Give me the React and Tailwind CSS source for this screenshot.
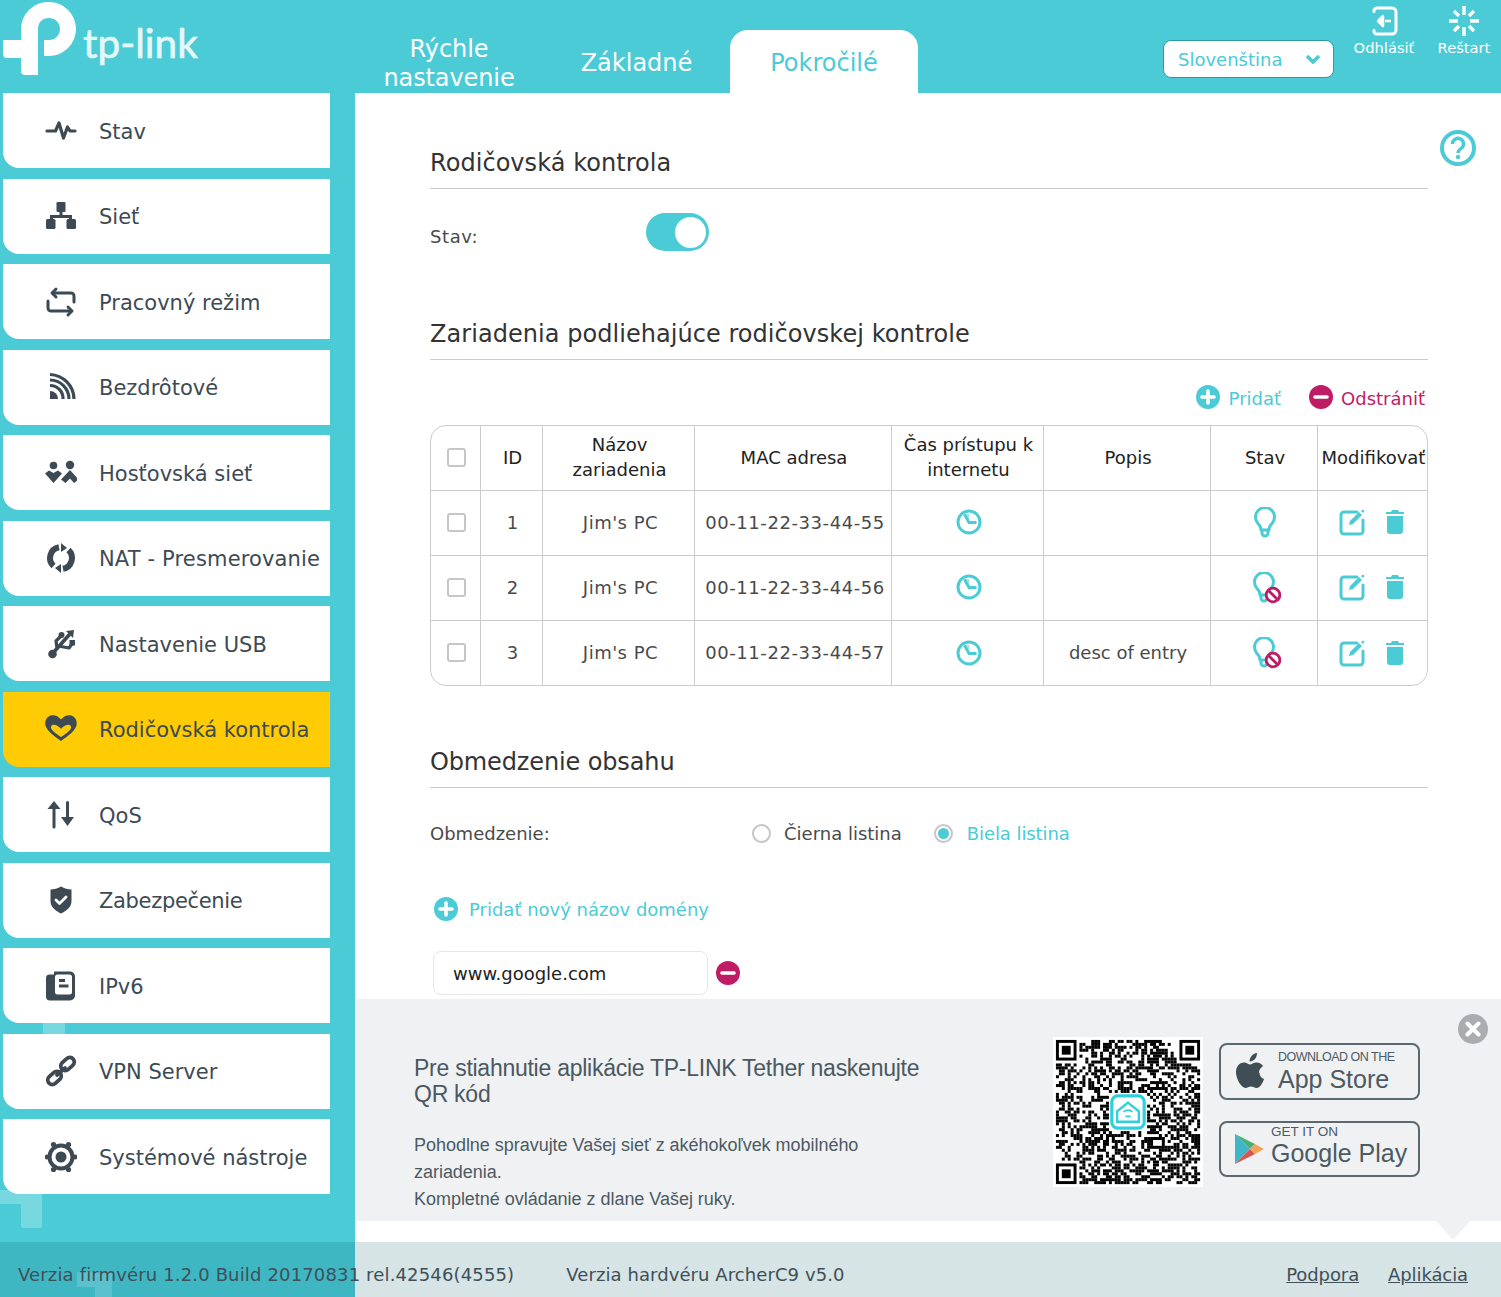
import React from "react";

const TEAL = "#4acbd6";
const DARK = "#3d4a54";
const RED = "#c01c66";

function Svg({ size = 32, w, h, children, className = "" }) {
  return (
    <svg width={w || size} height={h || size} viewBox={`0 0 ${w || size} ${h || size}`} className={`shrink-0 ${className}`}>
      {children}
    </svg>
  );
}

const stroke = { fill: "none", stroke: DARK, strokeLinecap: "round", strokeLinejoin: "round" };

const icons = {
  stav: (
    <path d="M2 16h8.500l3.500-8 4.500 15 4-11 2.500 4H30" {...stroke} strokeWidth="3.200" />
  ),
  siet: (
    <g fill={DARK}>
      <rect x="11.500" y="2" width="9" height="10" rx="1" />
      <path d="M14.500 11h3v4H27v5h-3v-2H8v2H5v-5h9.500z" />
      <rect x="1" y="19" width="9.500" height="10" rx="1.500" />
      <rect x="21.500" y="19" width="9.500" height="10" rx="1.500" />
    </g>
  ),
  rezim: (
    <g {...stroke} strokeWidth="3">
      <path d="M8 7h18a3 3 0 0 1 3 3v6" />
      <path d="M11 3 7 7l4 4" />
      <path d="M3 15v7a3 3 0 0 0 3 3h19" />
      <path d="M23 21l4 4-4 4" />
    </g>
  ),
  wifi: (
    <g {...stroke} strokeWidth="3.200" strokeLinecap="butt">
      <path d="M5 14.500a13 13 0 0 1 13 13.500" />
      <path d="M5 9a19 19 0 0 1 19 19" />
      <path d="M5 3.500a25 25 0 0 1 24 24.500" />
      <path d="M5 20a8 8 0 0 1 8 8H5z" fill={DARK} stroke="none" />
    </g>
  ),
  guest: (
    <g fill={DARK}>
      <circle cx="8.500" cy="8.500" r="3.800" />
      <circle cx="25" cy="8" r="4.200" />
      <path d="M0 16.500l4-3 4.500 2.500 4.500-2.500 4 3L8.500 26z" />
      <path d="M25 13l8.500 9.500-4.500 3.500-4-4.500-4.500 4.500-4.500-3.500z" />
    </g>
  ),
  nat: (
    <g>
      <path d="M14 5.200A11 11 0 0 0 8.500 24" {...stroke} strokeWidth="6" strokeLinecap="butt" />
      <path d="M18 26.800A11 11 0 0 0 23.500 8" {...stroke} strokeWidth="6" strokeLinecap="butt" />
      <path d="M16 1l6 5-6 4z" fill={DARK} />
      <path d="M16 31l-6-5 6-4z" fill={DARK} />
    </g>
  ),
  usb: (
    <g>
      <circle cx="7.500" cy="26" r="4.300" fill={DARK} />
      <path d="M8 25 24 7" {...stroke} strokeWidth="3.600" />
      <path d="M12 20 11 13l5-5" {...stroke} strokeWidth="3.200" />
      <path d="M16 18.500l8 1.500 3-4" {...stroke} strokeWidth="3.200" />
      <path d="M21 3l8-1-1 8z" fill={DARK} />
      <circle cx="16.500" cy="7" r="3" fill={DARK} />
      <rect x="24.500" y="12" width="5.500" height="5.500" fill={DARK} />
    </g>
  ),
  heart: (
    <g>
      <path d="M16 6.500C13 2.500 9 1.500 5.500 2.500 1.500 4 -.5 8 .5 12.500 2 18 9 23 16 28c7-5 14-10 15.500-15.500 1-4.500-1-8.500-5-10-3.500-1-7.500 0-10.500 4z" fill={DARK} />
      <path d="M16 24c-3-2-9-6-10-9-.5-2.500 1.500-4 4-3 2.500.5 4.500 2 6 4 1.500-2 3.500-3.500 6-4 2.500-1 4.500.5 4 3-1 3-7 7-10 9z" fill="#ffcb05" />
    </g>
  ),
  qos: (
    <g fill={DARK}>
      <path d="M9 2l6.500 8h-5V28a1.500 1.500 0 0 1-3 0V10h-5z" />
      <path d="M21 3.500a1.500 1.500 0 0 1 3 0V18h5l-6.500 9L16 18h5z" />
    </g>
  ),
  shield: (
    <g>
      <path d="M16 2.500c3 2 7 3 10.500 3v11.500c0 6-5 10-10.500 12.500C10.500 27 5.500 23 5.500 17V5.500c3.500 0 7.500-1 10.500-3z" fill={DARK} />
      <path d="M11 16l3.500 3.500L21 13" {...stroke} stroke="#fff" strokeWidth="2.800" />
    </g>
  ),
  doc: (
    <g>
      <path d="M9 1.500h16a5 5 0 0 1 5 5v19a5 5 0 0 1-5 5H5a4 4 0 0 1-4-4V8a3.500 3.500 0 0 1 3.500-3.500H9z" fill={DARK} />
      <rect x="10" y="4.500" width="17" height="20" rx="2.500" fill="#fff" />
      <path d="M14 10.500h6M14 16h9.500" {...stroke} strokeWidth="2.800" strokeLinecap="butt" />
    </g>
  ),
  link: (
    <g {...stroke} strokeWidth="3.800">
      <rect x="2" y="18.500" width="15" height="9" rx="4.500" transform="rotate(-42 9.500 23)" />
      <rect x="15" y="4.500" width="15" height="9" rx="4.500" transform="rotate(-42 22.500 9)" />
      <path d="M12 20l8-7" />
    </g>
  ),
  gear: (
    <g>
      <circle cx="16" cy="16" r="11.500" fill="#fff" stroke={DARK} strokeWidth="4" />
      <circle cx="16" cy="16" r="5.500" fill={DARK} />
      <g fill={DARK}>
        <circle cx="8.500" cy="3.500" r="2.600" />
        <circle cx="23.500" cy="3.500" r="2.600" />
        <circle cx="8.500" cy="28.500" r="2.600" />
        <circle cx="23.500" cy="28.500" r="2.600" />
        <circle cx="2" cy="16" r="2.400" />
        <circle cx="30" cy="16" r="2.400" />
      </g>
    </g>
  ),
};

function SideItem({ icon, label, active, track = "" }) {
  return (
    <div className={`relative flex items-center w-[327px] h-[75px] rounded-bl-[16px] ${active ? "bg-[#ffcb05]" : "bg-white"}`}>
      <div className="w-[96px] flex justify-center pl-[20px] pr-0">
        <Svg>{icons[icon]}</Svg>
      </div>
      <span className={`mt-[4px] text-[21px] text-[#3d4a54] whitespace-nowrap ${track}`}>{label}</span>
    </div>
  );
}

function Plus() {
  return (
    <Svg size={24}>
      <circle cx="12" cy="12" r="12" fill={TEAL} />
      <path d="M12 6v12M6 12h12" stroke="#fff" strokeWidth="3.600" strokeLinecap="round" />
    </Svg>
  );
}

function Minus() {
  return (
    <Svg size={24}>
      <circle cx="12" cy="12" r="12" fill={RED} />
      <path d="M6 12h12" stroke="#fff" strokeWidth="3.600" strokeLinecap="round" />
    </Svg>
  );
}

function Clock() {
  return (
    <Svg size={26}>
      <circle cx="13" cy="13" r="11" fill="#fff" stroke={TEAL} strokeWidth="3" />
      <path d="M7.500 5 13 13.500 13.500 5z" fill={TEAL} opacity="0.5" />
      <path d="M8.500 5.500l4.500 8h7.500" fill="none" stroke={TEAL} strokeWidth="2.800" />
    </Svg>
  );
}

function Bulb({ off }) {
  return (
    <Svg w={32} h={34} className="mt-[3px]">
      <g fill="none" stroke={TEAL} strokeWidth="3" strokeLinecap="round" strokeLinejoin="round" transform={off ? "translate(-1 0)" : "translate(0 0)"}>
        <path d="M12 23c0-3-1-4.500-3-6.500a9.500 9.500 0 1 1 14 0c-2 2-3 3.500-3 6.500z" />
        <path d="M13 23v3a3 3 0 0 0 6 0v-3" />
      </g>
      {off && (
        <g fill="#fff" stroke={RED} strokeWidth="2.800">
          <circle cx="24" cy="23" r="6.800" />
          <path d="M19.500 18.500l9 9" />
        </g>
      )}
    </Svg>
  );
}

function Edit() {
  return (
    <Svg size={28}>
      <path d="M19 4H6a3 3 0 0 0-3 3v16a3 3 0 0 0 3 3h16a3 3 0 0 0 3-3V12" fill="none" stroke={TEAL} strokeWidth="3" strokeLinecap="round" />
      <path d="M11 17l1-4 9-9 3 3-9 9z" fill={TEAL} />
      <path d="M23 3l2-1.500 1.500 1.500-1.500 2z" fill={TEAL} />
    </Svg>
  );
}

function Trash() {
  return (
    <Svg w={20} h={28}>
      <path d="M7 2h6l1 2h5v2H1V4h5z" fill={TEAL} />
      <path d="M2 8h16v15a3 3 0 0 1-3 3H5a3 3 0 0 1-3-3z" fill={TEAL} />
    </Svg>
  );
}

function Heading({ children, track = "tracking-[0.05px]" }) {
  return (
    <div className={`h-[42px] pt-[1px] border-b border-[#cccccc] text-[24px] leading-[30px] text-[#333] whitespace-nowrap ${track}`}>
      {children}
    </div>
  );
}

const Td = ({ children, className = "" }) => (
  <td className={`border-r border-b border-[#cccccc] text-center align-middle p-0 pb-[2px] pl-[2px] ${className}`}>{children}</td>
);

function Check() {
  return (
    <div className="flex justify-center">
      <span className="block w-[19px] h-[19px] rounded-[3px] border-2 border-[#c6c6c6] bg-white" />
    </div>
  );
}

const rows = [
  { id: 1, mac: "00-11-22-33-44-55", desc: "", off: false },
  { id: 2, mac: "00-11-22-33-44-56", desc: "", off: true },
  { id: 3, mac: "00-11-22-33-44-57", desc: "desc of entry", off: true },
];

function DeviceTable() {
  const th = "border-r border-b border-[#cccccc] text-center align-middle p-0 pb-[2px] pl-[2px] font-normal leading-[25px] text-[#222]";
  return (
    <div className="w-[998px] h-[261px] rounded-[16px] border border-[#cccccc] overflow-hidden">
      <table className="w-[996px] table-fixed border-separate border-spacing-0 text-[18px]">
        <colgroup>
          <col className="w-[50px]" />
          <col className="w-[62px]" />
          <col className="w-[152px]" />
          <col className="w-[197px]" />
          <col className="w-[152px]" />
          <col className="w-[167px]" />
          <col className="w-[107px]" />
          <col className="w-[109px]" />
        </colgroup>
        <thead>
          <tr className="h-[65px]">
            <th className={th}><Check /></th>
            <th className={th}>ID</th>
            <th className={th}>Názov<br />zariadenia</th>
            <th className={th}>MAC adresa</th>
            <th className={th}>Čas prístupu k<br />internetu</th>
            <th className={th}>Popis</th>
            <th className={th}>Stav</th>
            <th className={`${th} border-r-0 whitespace-nowrap`}>Modifikovať</th>
          </tr>
        </thead>
        <tbody>
          {rows.map((r, i) => {
            const bb = i === 2 ? "border-b-0" : "";
            return (
              <tr key={r.id} className="h-[65px] text-[#4a4a4a]">
                <Td className={bb}><Check /></Td>
                <Td className={bb}>{r.id}</Td>
                <Td className={`${bb} pl-[4px] tracking-[0.5px]`}>Jim's PC</Td>
                <Td className={`${bb} pl-[4px] tracking-[0.57px]`}>{r.mac}</Td>
                <Td className={bb}><div className="flex justify-center"><Clock /></div></Td>
                <Td className={bb}>{r.desc}</Td>
                <Td className={bb}><div className="flex justify-center"><Bulb off={r.off} /></div></Td>
                <Td className={`${bb} border-r-0`}>
                  <div className="flex justify-center items-center gap-[19px] pr-[5px]"><Edit /><Trash /></div>
                </Td>
              </tr>
            );
          })}
        </tbody>
      </table>
    </div>
  );
}

function Qr() {
  const n = 49;
  let seed = 2017;
  const rnd = () => {
    seed = (seed * 16807) % 2147483647;
    return seed / 2147483647;
  };
  const cells = [];
  const inFinder = (x, y) =>
    (x < 8 && y < 8) || (x > n - 9 && y < 8) || (x < 8 && y > n - 9);
  for (let y = 0; y < n; y++) {
    for (let x = 0; x < n; x++) {
      if (inFinder(x, y)) continue;
      if (x >= 18 && x <= 30 && y >= 18 && y <= 30) continue;
      if (rnd() > 0.48) cells.push(<rect key={`${x}-${y}`} x={x + 1} y={y + 1} width="1.02" height="1.02" />);
    }
  }
  const finder = (x, y) => (
    <g key={`${x}${y}`}>
      <rect x={x + 1} y={y + 1} width="7" height="7" />
      <rect x={x + 2} y={y + 2} width="5" height="5" fill="#fff" />
      <rect x={x + 3} y={y + 3} width="3" height="3" />
    </g>
  );
  return (
    <svg width="150" height="150" viewBox="0 0 51 51" className="shrink-0">
      <rect width="51" height="51" fill="#fff" />
      <g fill="#000">
        {cells}
        {finder(0, 0)}
        {finder(n - 7, 0)}
        {finder(0, n - 7)}
      </g>
      <rect x="20" y="20" width="11" height="11" rx="2" fill="#fff" stroke="#2fd0dc" strokeWidth="1.100" />
      <path d="M25.500 22.300l3.700 3v3.500h-7.400v-3.500z" fill="none" stroke="#2fd0dc" strokeWidth="0.800" />
      <path d="M24 25.500a2 2 0 0 1 3 0M24.600 27h1.800" fill="none" stroke="#2fd0dc" strokeWidth="0.600" />
    </svg>
  );
}

function StoreBadge({ children, tall }) {
  return (
    <div className={`w-[201px] ${tall ? "h-[57px]" : "h-[56px]"} rounded-[8px] border-2 border-[#5c6870] flex items-center pl-[13px] font-['Liberation_Sans',Arial,sans-serif] text-[#4c5a62]`}>
      {children}
    </div>
  );
}

export default function App() {
  const items = [
    ["stav", "Stav"],
    ["siet", "Sieť"],
    ["rezim", "Pracovný režim"],
    ["wifi", "Bezdrôtové"],
    ["guest", "Hosťovská sieť"],
    ["nat", "NAT - Presmerovanie", "tracking-[0.15px]"],
    ["usb", "Nastavenie USB"],
    ["heart", "Rodičovská kontrola"],
    ["qos", "QoS"],
    ["shield", "Zabezpečenie", "tracking-[-0.33px]"],
    ["doc", "IPv6"],
    ["link", "VPN Server"],
    ["gear", "Systémové nástroje"],
  ];
  return (
    <div className="relative w-[1501px] h-[1297px] overflow-hidden flex flex-col bg-white font-['DejaVu_Sans',Verdana,sans-serif]">
      {/* Header */}
      <header className="relative h-[93px] shrink-0 flex bg-[#4acbd6]">
        <div className="w-[355px] flex items-start pl-[3px] pt-[2px]">
          <svg width="74" height="74" viewBox="3 2 74 74" className="shrink-0">
            <path fill="#fff" d="M21 40V29A27 27 0 0 1 48 2h1a27 27 0 0 1 27 27 27 27 0 0 1-27 27h-5V40h5a11 11 0 0 0 0-22h-1a10 10 0 0 0-10 10v47H25q-4 0-4-4V58H7q-4 0-4-4V40z" />
          </svg>
          <span className="ml-[6px] mt-[16px] text-[40.500px] leading-[50px] text-[#e4f8fa] font-['Lato',sans-serif] [-webkit-text-stroke:0.7px_#e4f8fa]">tp-link</span>
        </div>
        <nav className="flex items-end">
          <div className="w-[188px] h-[63px] pt-[4px] flex items-center justify-center text-center text-[24px] leading-[29px] tracking-[-0.1px] text-white">Rýchle<br />nastavenie</div>
          <div className="w-[187px] h-[63px] pt-[2px] flex items-center justify-center text-[24px] text-white">Základné</div>
          <div className="w-[188px] h-[63px] pt-[2px] flex items-center justify-center text-[24px] text-[#4acbd6] bg-white rounded-t-[18px]">Pokročilé</div>
        </nav>
        <div className="ml-[245px] mt-[40px] w-[171px] h-[38px] rounded-[8px] bg-white border border-[#2b9aa6] flex items-center justify-between pl-[14px] pr-[12px] text-[18px] text-[#4acbd6] shrink-0">
          Slovenština
          <svg width="16" height="10" viewBox="0 0 16 10"><path d="M2 2l6 6 6-6" fill="none" stroke="#4acbd6" strokeWidth="3.600" /></svg>
        </div>
        <div className="w-[100px] flex flex-col items-center pt-[5px] ml-[0px] text-[14.700px] text-white shrink-0">
          <svg width="32" height="32" viewBox="0 0 32 32">
            <path d="M6 6.500A3 3 0 0 1 9 3h15a4 4 0 0 1 4 4v18a4 4 0 0 1-4 4H9a3 3 0 0 1-3-3.500" fill="none" stroke="#fff" strokeWidth="3" strokeLinecap="round" />
            <path d="M15 11l-5 5 5 5zM17 16h6" fill="#fff" stroke="#fff" strokeWidth="2.500" strokeLinejoin="round" />
          </svg>
          <span className="mt-[2px] leading-[18px] whitespace-nowrap">Odhlásiť</span>
        </div>
        <div className="w-[60px] flex flex-col items-center pt-[5px] text-[14.700px] text-white shrink-0">
          <svg width="32" height="32" viewBox="0 0 32 32">
            <g stroke="#fff" strokeWidth="3.400" strokeLinecap="butt">
              <path d="M16 1v9M16 22v9M1 16h9M22 16h9" />
              <path d="M6 6l5 5M21 21l5 5M26 6l-5 5M11 21l-5 5" />
            </g>
          </svg>
          <span className="mt-[2px] leading-[18px] whitespace-nowrap">Reštart</span>
        </div>
      </header>

      <div className="flex flex-1 min-h-0">
        {/* Sidebar */}
        <aside className="relative w-[355px] shrink-0 bg-[#4acbd6] pl-[3px] overflow-hidden">
          <div className="absolute left-[43px] top-[930px] w-[22px] h-[40px] bg-white/25" />
          <div className="absolute left-0 top-[1097px] w-[21px] h-[14px] bg-white/25" />
          <div className="absolute left-[21px] top-[1097px] w-[21px] h-[38px] rounded-b-[2px] bg-white/25" />
          <div className="relative flex flex-col gap-[10.500px]">
            {items.map(([ic, l, t]) => (
              <SideItem key={ic} icon={ic} label={l} track={t} active={ic === "heart"} />
            ))}
          </div>
        </aside>

        {/* Main */}
        <main className="flex-1 min-w-0 flex flex-col">
          <div className="relative h-[906px] shrink-0 overflow-hidden pl-[75px] pr-[73px] pt-[54px]">
            <svg width="38" height="38" viewBox="0 0 38 38" className="absolute right-[24px] top-[36px]">
              <circle cx="19" cy="19" r="16" fill="none" stroke={TEAL} strokeWidth="4" />
              <path d="M13.500 15a5.500 5.500 0 1 1 8.500 4.500c-2 1.500-3 2.500-3 4.500" fill="none" stroke={TEAL} strokeWidth="3.400" />
              <circle cx="19" cy="28" r="2.200" fill={TEAL} />
            </svg>
            <Heading>Rodičovská kontrola</Heading>
            <div className="flex items-center h-[38px] mt-[24px]">
              <span className="w-[216px] text-[18px] tracking-[0.6px] text-[#4a4a4a] pt-[8px]">Stav:</span>
              <div className="w-[63px] h-[38px] rounded-full bg-[#4acbd6] flex items-center justify-end pr-[3px]">
                <div className="w-[31px] h-[31px] rounded-full bg-white" />
              </div>
            </div>
            <div className="mt-[67px]">
              <Heading>Zariadenia podliehajúce rodičovskej kontrole</Heading>
            </div>
            <div className="flex items-center justify-end h-[26px] mt-[24px] text-[18px] pr-[3px]">
              <Plus />
              <span className="ml-[9px] pt-[2px] text-[#4acbd6]">Pridať</span>
              <span className="ml-[28px]"><Minus /></span>
              <span className="ml-[8px] pt-[2px] text-[#c01c66]">Odstrániť</span>
            </div>
            <div className="mt-[15px]"><DeviceTable /></div>
            <div className="mt-[60px]">
              <Heading track="tracking-[-0.13px]">Obmedzenie obsahu</Heading>
            </div>
            <div className="flex items-center h-[26px] mt-[32px] text-[18px] text-[#4a4a4a]">
              <span className="w-[322px]">Obmedzenie:</span>
              <span className="w-[19px] h-[19px] rounded-full border-2 border-[#c6c6c6] bg-white" />
              <span className="ml-[13px]">Čierna listina</span>
              <span className="ml-[32px] w-[19px] h-[19px] rounded-full border-2 border-[#c6c6c6] bg-white flex items-center justify-center">
                <span className="w-[11px] h-[11px] rounded-full bg-[#4acbd6]" />
              </span>
              <span className="ml-[14px] text-[#4acbd6] tracking-[-0.08px]">Biela listina</span>
            </div>
            <div className="flex items-center h-[26px] mt-[50px] pl-[4px] text-[18px] text-[#4acbd6]">
              <Plus />
              <span className="ml-[11px]">Pridať nový názov domény</span>
            </div>
            <div className="flex items-center mt-[29px] ml-[3px]">
              <div className="w-[275px] h-[44px] rounded-[8px] border border-[#e6e6e6] flex items-center pl-[19px] text-[18px] text-[#222]">www.google.com</div>
              <span className="ml-[8px]"><Minus /></span>
            </div>
          </div>

          {/* Banner */}
          <div className="relative h-[222px] shrink-0 bg-[#f0f1f3] flex font-['Liberation_Sans',Arial,sans-serif] text-[#4c5a62]">
            <div className="w-[698px] pl-[59px] pt-[56px] shrink-0">
              <div className="text-[23px] leading-[26px] tracking-[-0.26px] text-[#4a5860] w-[540px]">Pre stiahnutie aplikácie TP-LINK Tether naskenujte QR kód</div>
              <div className="mt-[25px] text-[18px] leading-[27px] w-[470px] tracking-[-0.03px]">Pohodlne spravujte Vašej sieť z akéhokoľvek mobilného zariadenia.<br />Kompletné ovládanie z dlane Vašej ruky.</div>
            </div>
            <div className="pt-[38px]"><Qr /></div>
            <div className="ml-[16px] pt-[44px] flex flex-col gap-[21px]">
              <StoreBadge tall>
                <svg width="34" height="38" viewBox="0 0 34 38" className="shrink-0">
                  <path fill="#3f4d55" d="M25 20c0-4 3-6 4-7-2-3-5-3.500-6.500-3.500-3 0-5 2-6.500 2s-3.500-2-6-2c-3.500 0-8 3-8 9.500 0 7 5.500 16 9.500 16 2 0 3-1.500 5.500-1.500s3.500 1.500 5.500 1.500c4 0 7-7 7.500-9-3-1-4.500-3.500-4.500-6.500zM21 6c1.500-2 2-4 2-6-2 0-4.500 1.500-5.500 3-1 1.500-2 3.500-2 5.500 2 .2 4-.8 5.500-2.500z" />
                </svg>
                <div className="ml-[10px]">
                  <div className="text-[12.500px] leading-[13px] tracking-[-0.5px] mt-[1px]">DOWNLOAD ON THE</div>
                  <div className="text-[25px] leading-[30px] whitespace-nowrap">App Store</div>
                </div>
              </StoreBadge>
              <StoreBadge>
                <svg width="30" height="32" viewBox="0 0 30 32" className="shrink-0">
                  <path d="M1 1l15 15L1 31z" fill="#3fb6c8" />
                  <path d="M1 1l20 10-5 5z" fill="#4caf7a" />
                  <path d="M1 31l20-10-5-5z" fill="#d9534f" />
                  <path d="M21 11l9 5-9 5-5-5z" fill="#f5a25d" />
                </svg>
                <div className="ml-[7px] mb-[5px]">
                  <div className="text-[13.500px] leading-[14px] mb-[-1px]">GET IT ON</div>
                  <div className="text-[25px] leading-[30px] whitespace-nowrap">Google Play</div>
                </div>
              </StoreBadge>
            </div>
            <div className="absolute right-[13px] top-[15px] w-[30px] h-[30px] rounded-full bg-[#aaacb0] flex items-center justify-center">
              <svg width="16" height="16" viewBox="0 0 16 16"><path d="M2.500 2.500l11 11M13.500 2.500l-11 11" stroke="#fff" strokeWidth="4" strokeLinecap="round" /></svg>
            </div>
            <div className="absolute left-[1081px] top-full w-0 h-0 border-x-[17px] border-x-transparent border-t-[19px] border-t-[#f0f1f3]" />
          </div>
          <div className="flex-1" />
        </main>
      </div>

      {/* Footer */}
      <footer className="relative h-[55px] shrink-0 pt-[10px] bg-[#d6e4e5] flex items-center text-[18px] text-[#3f4f58]">
        <div className="absolute left-0 top-0 w-[355px] h-full bg-[#3fb7c3]" />
        <div className="absolute left-[77px] top-[30px] w-[18px] h-[15px] bg-white/15" />
        <div className="absolute left-[95px] top-[30px] w-[17px] h-[25px] bg-white/15" />
        <span className="relative ml-[18px] tracking-[0.15px] whitespace-nowrap">Verzia firmvéru 1.2.0 Build 20170831 rel.42546(4555)</span>
        <span className="relative ml-[52px] tracking-[0.08px] whitespace-nowrap">Verzia hardvéru ArcherC9 v5.0</span>
        <a className="relative ml-auto underline tracking-[-0.1px] whitespace-nowrap">Podpora</a>
        <a className="relative ml-[29px] mr-[33px] underline tracking-[-0.1px] whitespace-nowrap">Aplikácia</a>
      </footer>
    </div>
  );
}
